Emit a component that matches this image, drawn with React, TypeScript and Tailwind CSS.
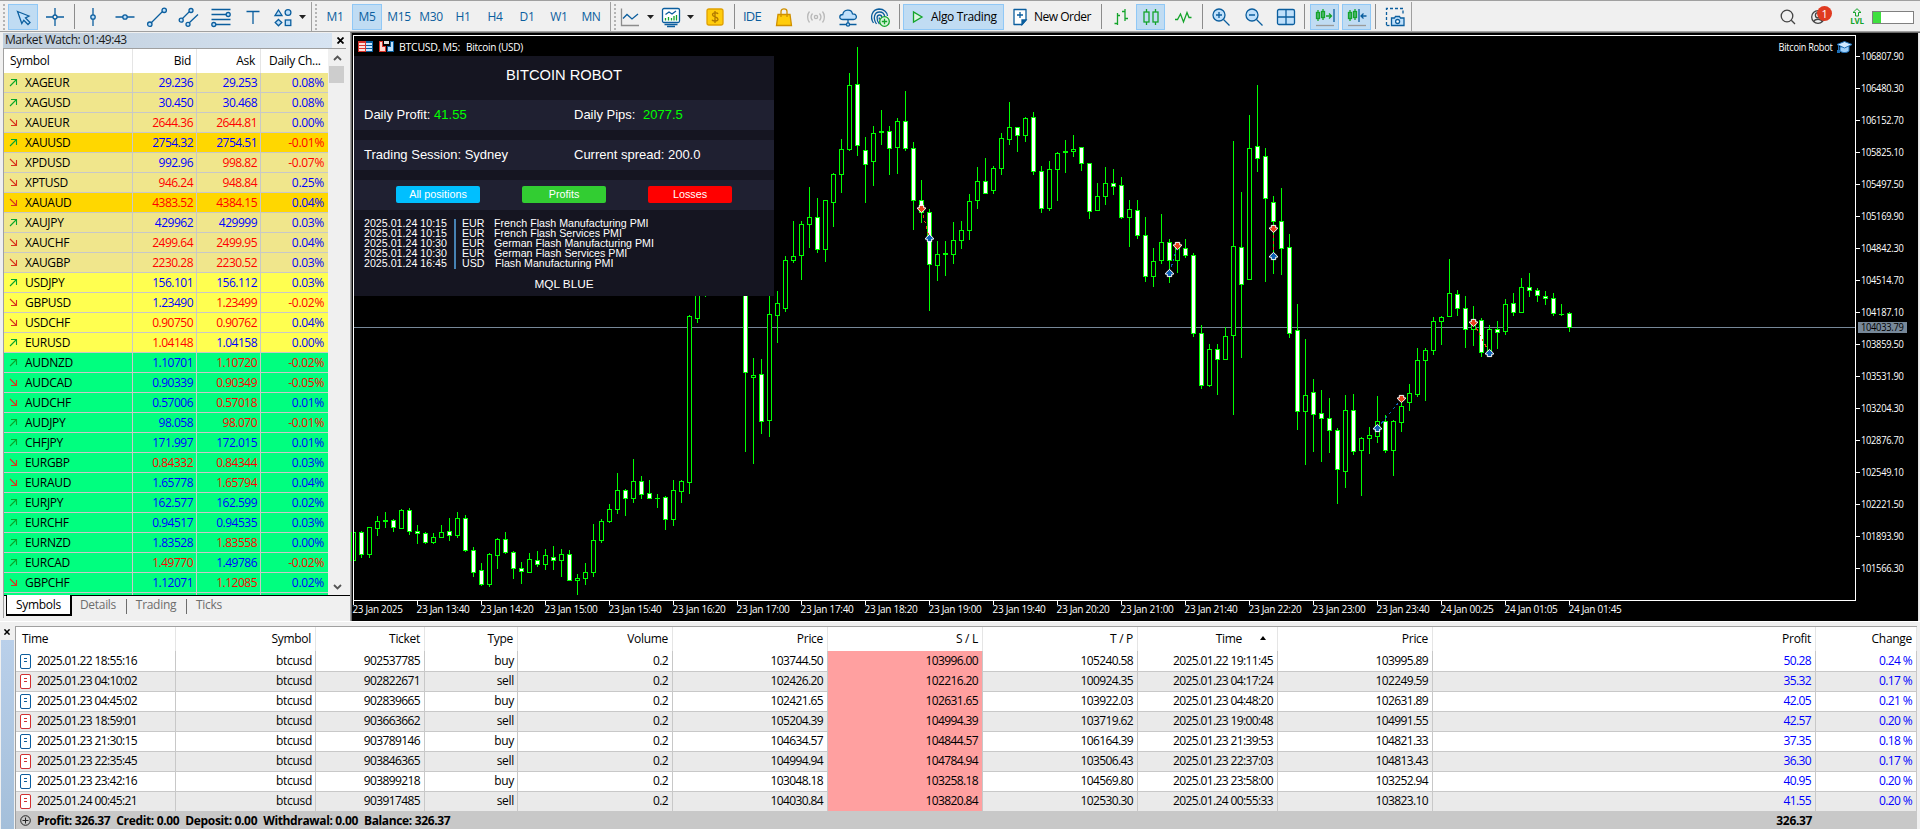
import React from 'react';
import clsx from 'clsx';

type Dir = 'up' | 'down';

interface Quote {
  symbol: string;
  dir: Dir;
  bid: string;
  ask: string;
  change: string;
  // r = red, b = blue for bid and ask
  tone: string;
  group: 'metal' | 'gold' | 'major' | 'cross';
}

const q = (symbol: string, dir: Dir, bid: string, ask: string, change: string, tone: string, group: Quote['group']): Quote => ({
  symbol, dir, bid, ask, change, tone, group,
});

const quotes: Quote[] = [
  q('XAGEUR', 'up', '29.236', '29.253', '0.08%', 'bb', 'metal'),
  q('XAGUSD', 'up', '30.450', '30.468', '0.08%', 'bb', 'metal'),
  q('XAUEUR', 'down', '2644.36', '2644.81', '0.00%', 'rr', 'metal'),
  q('XAUUSD', 'up', '2754.32', '2754.51', '-0.01%', 'bb', 'gold'),
  q('XPDUSD', 'down', '992.96', '998.82', '-0.07%', 'br', 'metal'),
  q('XPTUSD', 'down', '946.24', '948.84', '0.25%', 'rr', 'metal'),
  q('XAUAUD', 'down', '4383.52', '4384.15', '0.04%', 'rr', 'gold'),
  q('XAUJPY', 'up', '429962', '429999', '0.03%', 'bb', 'metal'),
  q('XAUCHF', 'down', '2499.64', '2499.95', '0.04%', 'rr', 'metal'),
  q('XAUGBP', 'down', '2230.28', '2230.52', '0.03%', 'rr', 'metal'),
  q('USDJPY', 'up', '156.101', '156.112', '0.03%', 'bb', 'major'),
  q('GBPUSD', 'down', '1.23490', '1.23499', '-0.02%', 'br', 'major'),
  q('USDCHF', 'down', '0.90750', '0.90762', '0.04%', 'rr', 'major'),
  q('EURUSD', 'up', '1.04148', '1.04158', '0.00%', 'rb', 'major'),
  q('AUDNZD', 'up', '1.10701', '1.10720', '-0.02%', 'br', 'cross'),
  q('AUDCAD', 'down', '0.90339', '0.90349', '-0.05%', 'br', 'cross'),
  q('AUDCHF', 'down', '0.57006', '0.57018', '0.01%', 'br', 'cross'),
  q('AUDJPY', 'up', '98.058', '98.070', '-0.01%', 'br', 'cross'),
  q('CHFJPY', 'up', '171.997', '172.015', '0.01%', 'bb', 'cross'),
  q('EURGBP', 'down', '0.84332', '0.84344', '0.03%', 'rr', 'cross'),
  q('EURAUD', 'down', '1.65778', '1.65794', '0.04%', 'br', 'cross'),
  q('EURJPY', 'up', '162.577', '162.599', '0.02%', 'bb', 'cross'),
  q('EURCHF', 'up', '0.94517', '0.94535', '0.03%', 'bb', 'cross'),
  q('EURNZD', 'up', '1.83528', '1.83558', '0.00%', 'br', 'cross'),
  q('EURCAD', 'up', '1.49770', '1.49786', '-0.02%', 'rb', 'cross'),
  q('GBPCHF', 'down', '1.12071', '1.12085', '0.02%', 'br', 'cross'),
];

const groupBg = {
  metal: 'bg-[#f0e68c]',
  gold: 'bg-[#ffd700]',
  major: 'bg-[#ffff50]',
  cross: 'bg-[#00ff7f]',
};

const deals = [
  ['2025.01.22 18:55:16', 'btcusd', '902537785', 'buy', '0.2', '103744.50', '103996.00', '105240.58', '2025.01.22 19:11:45', '103995.89', '50.28', '0.24 %'],
  ['2025.01.23 04:10:02', 'btcusd', '902822671', 'sell', '0.2', '102426.20', '102216.20', '100924.35', '2025.01.23 04:17:24', '102249.59', '35.32', '0.17 %'],
  ['2025.01.23 04:45:02', 'btcusd', '902839665', 'buy', '0.2', '102421.65', '102631.65', '103922.03', '2025.01.23 04:48:20', '102631.89', '42.05', '0.21 %'],
  ['2025.01.23 18:59:01', 'btcusd', '903663662', 'sell', '0.2', '105204.39', '104994.39', '103719.62', '2025.01.23 19:00:48', '104991.55', '42.57', '0.20 %'],
  ['2025.01.23 21:30:15', 'btcusd', '903789146', 'buy', '0.2', '104634.57', '104844.57', '106164.39', '2025.01.23 21:39:53', '104821.33', '37.35', '0.18 %'],
  ['2025.01.23 22:35:45', 'btcusd', '903846365', 'sell', '0.2', '104994.94', '104784.94', '103506.43', '2025.01.23 22:37:03', '104813.43', '36.30', '0.17 %'],
  ['2025.01.23 23:42:16', 'btcusd', '903899218', 'buy', '0.2', '103048.18', '103258.18', '104569.80', '2025.01.23 23:58:00', '103252.94', '40.95', '0.20 %'],
  ['2025.01.24 00:45:21', 'btcusd', '903917485', 'sell', '0.2', '104030.84', '103820.84', '102530.30', '2025.01.24 00:55:33', '103823.10', '41.55', '0.20 %'],
];

const dealHeads = ['Time', 'Symbol', 'Ticket', 'Type', 'Volume', 'Price', 'S / L', 'T / P', 'Time', 'Price', 'Profit', 'Change'];

const dealCols = 'grid grid-cols-[160px_140px_109px_93px_155px_155px_155px_155px_140px_155px_383px_101px]';

// bar index, high, body top, body bottom, low, 1 = falling (filled)
const candles: number[][] = [
  [0, 532, 532, 561, 561, 0], [1, 531, 532, 555, 558, 1], [2, 527, 527, 555, 558, 0], [3, 516, 521, 529, 536, 0],
  [4, 512, 520, 522, 528, 0], [5, 519, 520, 528, 532, 1], [6, 509, 510, 529, 529, 0], [7, 508, 510, 532, 535, 1],
  [8, 525, 531, 534, 544, 1], [9, 532, 533, 543, 544, 1], [10, 533, 537, 543, 544, 0], [11, 525, 532, 538, 538, 0],
  [12, 518, 531, 536, 541, 1], [13, 512, 518, 536, 538, 0], [14, 515, 518, 551, 552, 1], [15, 547, 550, 573, 577, 1],
  [16, 563, 570, 585, 586, 1], [17, 553, 554, 585, 587, 0], [18, 538, 539, 556, 569, 0], [19, 532, 539, 553, 554, 1],
  [20, 551, 552, 569, 579, 1], [21, 562, 568, 572, 584, 1], [22, 553, 559, 573, 573, 0], [23, 551, 560, 565, 567, 1],
  [24, 549, 555, 565, 570, 0], [25, 546, 557, 561, 570, 1], [26, 549, 554, 561, 577, 0], [27, 550, 554, 581, 581, 1],
  [28, 574, 578, 581, 595, 0], [29, 563, 572, 579, 585, 0], [30, 524, 540, 573, 577, 0], [31, 519, 521, 541, 543, 0],
  [32, 504, 509, 522, 523, 0], [33, 473, 490, 510, 514, 0], [34, 489, 490, 499, 516, 1], [35, 459, 481, 499, 503, 0],
  [36, 476, 481, 495, 499, 1], [37, 480, 493, 499, 499, 1], [38, 494, 498, 499, 508, 0], [39, 496, 497, 520, 530, 1],
  [40, 480, 490, 520, 526, 0], [41, 480, 481, 492, 503, 0], [42, 315, 316, 483, 494, 0], [43, 280, 280, 319, 323, 0],
  [44, 280, 280, 290, 297, 1], [49, 280, 280, 373, 452, 1], [50, 358, 375, 378, 464, 0], [51, 359, 374, 422, 434, 1],
  [52, 280, 314, 421, 437, 0], [53, 291, 303, 316, 343, 0], [54, 256, 260, 309, 312, 0], [55, 221, 256, 261, 263, 0],
  [56, 221, 224, 256, 280, 0], [57, 187, 217, 225, 248, 0], [58, 198, 217, 250, 253, 1], [59, 200, 200, 250, 262, 0],
  [60, 173, 174, 203, 227, 0], [61, 139, 149, 175, 193, 0], [62, 73, 85, 150, 151, 0], [63, 47, 84, 146, 156, 1],
  [64, 137, 150, 165, 203, 1], [65, 126, 133, 162, 186, 0], [66, 110, 131, 133, 145, 0], [67, 126, 131, 149, 175, 1],
  [68, 118, 121, 148, 174, 0], [69, 91, 121, 149, 151, 1], [70, 142, 148, 201, 230, 1], [71, 180, 200, 213, 223, 1],
  [72, 209, 212, 265, 311, 1], [73, 241, 254, 266, 281, 0], [74, 241, 253, 255, 276, 0], [75, 222, 240, 255, 264, 0],
  [76, 221, 230, 241, 249, 0], [77, 194, 201, 231, 240, 0], [78, 167, 181, 201, 209, 0], [79, 158, 181, 194, 194, 1],
  [80, 166, 168, 191, 194, 0], [81, 133, 138, 169, 175, 0], [82, 102, 127, 140, 145, 0], [83, 127, 127, 136, 152, 1],
  [84, 117, 118, 136, 142, 0], [85, 112, 117, 172, 175, 1], [86, 166, 171, 209, 213, 1], [87, 161, 169, 209, 211, 0],
  [88, 152, 153, 170, 201, 0], [89, 140, 151, 153, 173, 0], [90, 135, 149, 152, 157, 0], [91, 147, 147, 164, 171, 1],
  [92, 163, 163, 212, 219, 1], [93, 183, 196, 211, 211, 0], [94, 167, 183, 197, 205, 0], [95, 169, 183, 187, 195, 1],
  [96, 177, 185, 218, 219, 1], [97, 200, 209, 218, 247, 0], [98, 200, 210, 236, 239, 1], [99, 217, 235, 277, 282, 1],
  [100, 248, 261, 277, 287, 0], [101, 214, 242, 261, 264, 0], [102, 239, 242, 261, 283, 1], [103, 243, 246, 261, 273, 0],
  [104, 239, 248, 256, 258, 1], [105, 253, 255, 334, 337, 1], [106, 325, 333, 386, 389, 1], [107, 344, 349, 386, 387, 0],
  [108, 344, 349, 360, 395, 1], [109, 327, 336, 360, 360, 0], [110, 141, 246, 336, 415, 0], [111, 192, 247, 285, 358, 1],
  [112, 115, 148, 280, 280, 0], [113, 85, 146, 159, 172, 1], [114, 148, 156, 199, 282, 1], [115, 196, 202, 222, 274, 1],
  [116, 188, 221, 249, 275, 1], [117, 234, 247, 334, 338, 1], [118, 304, 330, 412, 430, 1], [119, 339, 395, 412, 465, 0],
  [120, 379, 392, 415, 452, 1], [121, 390, 413, 419, 462, 1], [122, 398, 418, 431, 453, 1], [123, 428, 430, 470, 504, 1],
  [124, 395, 410, 472, 488, 0], [125, 394, 410, 452, 455, 1], [126, 437, 438, 451, 496, 0], [127, 427, 435, 439, 454, 0],
  [128, 396, 421, 437, 443, 0], [129, 415, 421, 451, 453, 1], [130, 420, 421, 451, 476, 0], [131, 402, 406, 423, 432, 0],
  [132, 384, 393, 403, 411, 0], [133, 348, 360, 395, 397, 0], [134, 348, 350, 361, 401, 0], [135, 317, 321, 351, 355, 0],
  [136, 316, 317, 322, 345, 0], [137, 259, 293, 317, 317, 0], [138, 290, 294, 309, 316, 1], [139, 296, 308, 330, 348, 1],
  [140, 306, 320, 330, 346, 0], [141, 318, 320, 353, 357, 1], [142, 325, 329, 352, 352, 0], [143, 321, 329, 333, 349, 1],
  [144, 299, 304, 332, 335, 0], [145, 293, 303, 313, 316, 1], [146, 278, 287, 313, 313, 0], [147, 273, 287, 291, 297, 1],
  [148, 288, 290, 296, 302, 1], [149, 291, 296, 299, 305, 1], [150, 293, 298, 314, 316, 1], [151, 304, 314, 315, 316, 0],
  [152, 312, 313, 328, 332, 1],
];

const trades = [
  { from: [921, 209], to: [929, 238], kind: 'sell' },
  { from: [1169, 273], to: [1177, 246], kind: 'buy' },
  { from: [1273, 229], to: [1273, 256], kind: 'sell' },
  { from: [1377, 428], to: [1401, 399], kind: 'buy' },
  { from: [1473, 323], to: [1489, 353], kind: 'sell' },
];

const timeLabels = [
  '23 Jan 2025', '23 Jan 13:40', '23 Jan 14:20', '23 Jan 15:00', '23 Jan 15:40', '23 Jan 16:20', '23 Jan 17:00',
  '23 Jan 17:40', '23 Jan 18:20', '23 Jan 19:00', '23 Jan 19:40', '23 Jan 20:20', '23 Jan 21:00', '23 Jan 21:40',
  '23 Jan 22:20', '23 Jan 23:00', '23 Jan 23:40', '24 Jan 00:25', '24 Jan 01:05', '24 Jan 01:45',
];

const priceLabels = [
  '106807.90', '106480.30', '106152.70', '105825.10', '105497.50', '105169.90', '104842.30', '104514.70', '104187.10',
  '103859.50', '103531.90', '103204.30', '102876.70', '102549.10', '102221.50', '101893.90', '101566.30',
];

const BLUE = '#0b5e9e';
const PALE = '#bfe0fb';
const GREEN = '#14a42b';

/* ---------- toolbar ---------- */

const Glyph: React.FC<{ children: React.ReactNode; color?: string }> = ({ children, color = BLUE }) => (
  <svg className="w-6 h-6 shrink-0" viewBox="0 0 24 24" fill="none" stroke={color} strokeWidth={1.3}>
    {children}
  </svg>
);

const Slot: React.FC<{ w: string; active?: boolean; children?: React.ReactNode }> = ({ w, active, children }) => (
  <div className={clsx('h-[26px] flex items-center justify-center shrink-0', w, active && 'bg-[#c0dcf3] border border-[#90c8f6]')}>
    {children}
  </div>
);

const Sep: React.FC<{ w: string }> = ({ w }) => (
  <div className={clsx('flex justify-center shrink-0', w)}>
    <div className="w-px h-[25px] bg-[#8c8c8c]" />
  </div>
);

const Grip: React.FC<{ w: string; edge?: boolean }> = ({ w, edge }) => (
  <div className={clsx('h-[29px] flex items-center justify-center gap-[3px] shrink-0', w)}>
    {edge && <div className="w-px h-[29px] bg-[#a0a0a0]" />}
    <div className="w-[2px] h-[26px] bg-[repeating-linear-gradient(to_bottom,#b4b4b4_0_2px,transparent_2px_4px)]" />
  </div>
);

const Caret: React.FC<{ w: string }> = ({ w }) => (
  <div className={clsx('flex justify-center shrink-0', w)}>
    <svg className="w-[7px] h-1" viewBox="0 0 7 4"><path d="M0 0H7L3.5 4Z" fill="#222" /></svg>
  </div>
);

const Toolbar: React.FC = () => (
  <div className="h-8 flex items-center border-t border-b border-[#a0a0a0] bg-[#f0f0f0] pt-px shrink-0">
    <Grip w="w-[7px]" />
    <Slot w="w-[30px] mx-px" active>
      <Glyph>
        <path d="M6.5 6.5L18 11L14.5 13L19 17.5L17 19.5L12.8 15.2L10.8 18.5Z" fill={PALE} />
      </Glyph>
    </Slot>
    <Slot w="w-8"><Glyph><path d="M3 12H10M14 12H21M12 3V10M12 14V21" /><circle cx="12" cy="12" r="2" /></Glyph></Slot>
    <Sep w="w-[6px]" />
    <Slot w="w-8"><Glyph><path d="M12 3V10M12 14V21" /><circle cx="12" cy="12" r="2.2" fill={PALE} /></Glyph></Slot>
    <Slot w="w-8"><Glyph><path d="M2.5 12H10M14 12H21.5" /><circle cx="12" cy="12" r="2.2" fill={PALE} /></Glyph></Slot>
    <Slot w="w-8"><Glyph><path d="M6 18L18 6" /><circle cx="4.8" cy="19.2" r="2.2" fill={PALE} /><circle cx="19.2" cy="5.3" r="2.2" fill={PALE} /></Glyph></Slot>
    <Slot w="w-8">
      <Glyph>
        <path d="M5 14L12.5 6.5M12 18L21 9.5" />
        <circle cx="4.2" cy="15.2" r="2" fill={PALE} /><circle cx="14" cy="5.5" r="2" fill={PALE} /><circle cx="11" cy="19.3" r="2" fill={PALE} />
      </Glyph>
    </Slot>
    <Slot w="w-8">
      <Glyph>
        <path d="M2.5 4.5H21.5M2.5 9.5H17M2.5 14.5H21.5M7 19.5H21.5" />
        <circle cx="19.2" cy="9.5" r="2" fill={PALE} /><circle cx="4.8" cy="19.5" r="2" fill={PALE} />
      </Glyph>
    </Slot>
    <Slot w="w-8"><Glyph><path d="M5.5 6.5H18.5M12 6.5V19" /></Glyph></Slot>
    <Slot w="w-7">
      <Glyph>
        <path d="M7.5 5L11 10.5H4Z" fill={PALE} /><circle cx="17" cy="7.5" r="2.9" fill={PALE} />
        <path d="M7.5 14.5L10.8 17.5L7.5 20.8L4.2 17.5Z" fill={PALE} /><rect x="14.3" y="15" width="5.5" height="5.5" fill={PALE} />
      </Glyph>
    </Slot>
    <Caret w="w-[11px]" />
    <Grip w="w-[11px]" edge />
    {['M1', 'M5', 'M15', 'M30', 'H1', 'H4', 'D1', 'W1', 'MN'].map((tf) => (
      <Slot key={tf} w={tf === 'M5' ? 'w-[30px] mx-px' : 'w-8'} active={tf === 'M5'}>
        <span className="text-[12px] tracking-[-0.3px] text-[#0b5e9e]">{tf}</span>
      </Slot>
    ))}
    <Grip w="w-[11px]" edge />
    <Slot w="w-[24px]"><Glyph><path d="M3.5 3.5V20.5H21" stroke="#8c8c8c" /><path d="M5 13.5L9 9.5L14 14L20 9" /></Glyph></Slot>
    <Caret w="w-[16px]" />
    <Slot w="w-[26px]">
      <Glyph>
        <rect x="3.5" y="3.5" width="17" height="14" rx="1.5" fill="#fff" />
        <path d="M5.5 19.5H18.5M8 21.5H16" />
        <path d="M6.5 9.5L10 7L13 9L17 6" /><path d="M6.5 15.5V13M9.5 15.5V12M12.5 15.5V13M15 15.5V11M17.5 15.5V10" stroke={GREEN} />
      </Glyph>
    </Slot>
    <Caret w="w-[12px]" />
    <Slot w="w-[36px] pl-px">
      <Glyph color="#e0a000">
        <rect x="4" y="4" width="16" height="16" rx="2" fill="#ffcc0c" />
        <path d="M15 9C14.5 7.5 9.5 7.5 9.5 9.8C9.5 12 15 11.8 15 14.2C15 16.5 9.5 16.5 9 14.8M12 6V18" stroke="#b07800" />
      </Glyph>
    </Slot>
    <Sep w="w-[4px]" />
    <Slot w="w-8"><span className="text-[13px] tracking-[-0.7px] text-[#0b5e9e]">IDE</span></Slot>
    <Slot w="w-8">
      <Glyph color="#d09000">
        <path d="M6 9.5H18L19.5 20.5H4.5Z" fill="#ffcc0c" /><path d="M9 12V6.5C9 3 15 3 15 6.5V12" />
      </Glyph>
    </Slot>
    <Slot w="w-8">
      <Glyph color="#b8b8b8">
        <circle cx="12" cy="12" r="1.6" /><path d="M8.5 8.5C6.8 10.5 6.8 13.5 8.5 15.5M15.5 8.5C17.2 10.5 17.2 13.5 15.5 15.5M5.5 6.5C3 9.5 3 14.5 5.5 17.5M18.5 6.5C21 9.5 21 14.5 18.5 17.5" />
      </Glyph>
    </Slot>
    <Slot w="w-8">
      <Glyph>
        <path d="M7 14.5C2.5 14.5 3 9.5 6.8 9.5C7.5 4 15.5 3.5 16.5 8.8C21.5 8.8 21.5 14.5 17.5 14.5Z" fill={PALE} />
        <path d="M12 14.5V18M3.5 19.5H10M14 19.5H20.5" /><circle cx="12" cy="19.5" r="1.6" fill={PALE} />
      </Glyph>
    </Slot>
    <Slot w="w-8">
      <Glyph>
        <path d="M5.5 18C1.5 12 4 4.5 11 4C16 4 19.5 7.5 19.5 11M8.5 19C4.5 13 6.5 7 11.5 7C14.5 7 16.5 9 16.8 12M11.5 19C7.5 14 9 10 11.5 10C13 10 13.8 11 13.8 12.5M11.3 12.5V14.5" />
        <circle cx="16.5" cy="16.5" r="4.8" stroke={GREEN} fill="#d8f5dc" /><path d="M16.5 13.8V19.2M13.8 16.5H19.2" stroke={GREEN} />
      </Glyph>
    </Slot>
    <Sep w="w-[7px]" />
    <div className="w-[101px] h-[26px] flex items-center border border-[#90c8f6] bg-[#c0dcf3] shrink-0 pl-px">
      <Glyph color={GREEN}><path d="M8.5 7V17L17 12Z" fill="#dcf5e0" /></Glyph>
      <span className="text-[12px] tracking-[-0.35px] ml-[2px] whitespace-nowrap">Algo Trading</span>
    </div>
    <div className="w-[95px] h-[26px] flex items-center shrink-0 pl-[4px]">
      <Glyph>
        <path d="M6 4.5H18V15L14 19.5H6Z" fill="#fff" strokeLinejoin="round" /><path d="M18 15H14V19.5Z" fill={BLUE} /><path d="M12 7V13M9 10H15" />
      </Glyph>
      <span className="text-[12px] tracking-[-0.5px] ml-[2px] whitespace-nowrap">New Order</span>
    </div>
    <Sep w="w-[4px]" />
    <Slot w="w-[33px] pl-[2px]"><Glyph color={GREEN}><path d="M8.5 8V20M5.5 18.5H8.5M8.5 10.5H11M16 4V16M13 6.5H16M16 13.5H19" /></Glyph></Slot>
    <Slot w="w-[29px]" active><Glyph color={GREEN}><path d="M7.5 4V7M7.5 17V20M16.5 4V7M16.5 17V20" /><rect x="5" y="7" width="5" height="10" /><rect x="14" y="7" width="5" height="10" /></Glyph></Slot>
    <Slot w="w-[36px]"><Glyph color={GREEN}><path d="M4 14.5H6.5L9.5 9L12.5 17L16 7.5L18 12.5H20.5" /></Glyph></Slot>
    <Sep w="w-[3px]" />
    <Slot w="w-[34px]"><Glyph><circle cx="10" cy="10" r="6" fill={PALE} /><path d="M14.5 14.5L20.5 20.5M10 7V13M7 10H13" /></Glyph></Slot>
    <Slot w="w-8"><Glyph><circle cx="10" cy="10" r="6" fill={PALE} /><path d="M14.5 14.5L20.5 20.5M7 10H13" /></Glyph></Slot>
    <Slot w="w-8"><Glyph><rect x="3.5" y="4.5" width="17" height="15" rx="1.5" fill={PALE} /><path d="M12 4.5V19.5M3.5 12H20.5" /></Glyph></Slot>
    <Sep w="w-[5px]" />
    <Slot w="w-[29px] ml-[3px]" active>
      <Glyph color={GREEN}>
        <path d="M5 5V16M10 4V15" /><rect x="3.5" y="7.5" width="3" height="6" /><rect x="8.5" y="6.5" width="3" height="6" /><path d="M13 11H18M16 8.5L18.5 11L16 13.5" />
        <path d="M21 4V17" stroke={BLUE} /><path d="M3 20.5H21" stroke="#9a9a9a" />
      </Glyph>
    </Slot>
    <Slot w="w-[29px] ml-[3px]" active>
      <Glyph color={GREEN}>
        <path d="M5 5V16M10 4V15" /><rect x="3.5" y="7.5" width="3" height="6" /><rect x="8.5" y="6.5" width="3" height="6" />
        <path d="M14 4V17M21.5 11H16.5M18.5 8.5L16 11L18.5 13.5" stroke={BLUE} /><path d="M3 20.5H21" stroke="#9a9a9a" />
      </Glyph>
    </Slot>
    <Sep w="w-[8px]" />
    <Slot w="w-[32px]">
      <Glyph>
        <path d="M3.5 20V3.5H20V9" strokeDasharray="3 2" /><path d="M3.5 20.5H7" strokeDasharray="3 2" />
        <path d="M8.5 13H11.5L12.5 11.5H16.5L17.5 13H21V20.5H8.5Z" fill={PALE} /><circle cx="14.6" cy="16.5" r="2" fill="#fff" />
      </Glyph>
    </Slot>
    <div className="w-px h-[29px] bg-[#a0a0a0] shrink-0" />
    <div className="flex-1" />
    <Slot w="w-[28px]"><Glyph color="#444"><circle cx="11" cy="11" r="5.8" /><path d="M15.3 15.3L19 19" /></Glyph></Slot>
    <div className="relative w-[39px] flex pl-[4px]">
      <Glyph color="#444"><circle cx="12" cy="12" r="6.3" /><circle cx="12" cy="10.3" r="2.6" /><path d="M7.8 16.5C9 13.5 15 13.5 16.2 16.5" /></Glyph>
      <span className="absolute left-[15px] top-px w-[15px] h-[15px] rounded-full bg-[#e03a20] text-white text-[11px] leading-[15px] text-center">1</span>
    </div>
    <div className="w-[32px] flex flex-col items-center">
      <svg className="w-[10px] h-[9px]" viewBox="0 0 10 9" fill="none" stroke={GREEN}><path d="M5 .7L9 4.5H6.5V8H3.5V4.5H1Z" /></svg>
      <span className="text-[8px] leading-[8px] font-bold text-[#14a42b]">LVL</span>
    </div>
    <div className="w-[42px] h-[13px] border border-[#808080] bg-white ml-[-1px] mr-[6px] mt-px">
      <div className="w-[8px] h-full bg-[#3fe03f]" />
    </div>
  </div>
);

/* ---------- market watch ---------- */

const Trend: React.FC<{ dir: Dir }> = ({ dir }) => (
  <svg className="w-[9px] h-[9px]" viewBox="0 0 9 9" fill="none" stroke={dir === 'up' ? '#0aa52a' : '#d8341c'} strokeWidth={1.1}>
    {dir === 'up' ? <path d="M1 8L7.5 1.5M2 1.5H7.5V7" /> : <path d="M1 1L7.5 7.5M2 7.5H7.5V2" />}
  </svg>
);

const quoteCols = 'grid grid-cols-[129px_64px_64px_67px]';

const MarketWatch: React.FC = () => (
  <div className="w-[350px] shrink-0 flex flex-col pl-[3px] pt-px">
    <div className="flex h-[15px] shrink-0">
      <div className="w-[329px] bg-linear-to-r from-[#bfcddb] to-[#d7e4f2] pl-[2px] leading-[13px] text-[12px] tracking-[-0.45px] text-[#1a1a1a]">
        Market Watch: 01:49:43
      </div>
      <svg className="w-[7px] h-[7px] ml-[5px] mt-[4px]" viewBox="0 0 7 7" stroke="#000" strokeWidth={1.8}><path d="M.5 .5L6.5 6.5M6.5 .5L.5 6.5" /></svg>
    </div>
    <div className="w-[343px] h-[547px] flex border-t border-l border-[#a0a0a0] shrink-0">
      <div className="w-[324px] overflow-hidden bg-white">
        <div className={clsx(quoteCols, 'h-[24px] leading-[24px]')}>
          <div className="pl-[6px] border-r border-[#e5e5e5]">Symbol</div>
          <div className="pr-[5px] border-r border-[#e5e5e5] text-right">Bid</div>
          <div className="pr-[5px] border-r border-[#e5e5e5] text-right">Ask</div>
          <div className="pl-[8px] whitespace-nowrap">Daily Ch...</div>
        </div>
        {quotes.map((row) => (
          <div key={row.symbol} className={clsx(quoteCols, 'h-5 leading-[19px] text-right border-b border-[#c8c8c8] tracking-[-0.5px]', groupBg[row.group])}>
            <div className="flex items-center gap-[7px] pl-[5px] border-r border-[#c8c8c8] tracking-[-0.3px]"><Trend dir={row.dir} />{row.symbol}</div>
            <div className={clsx('pr-[3px] border-r border-[#c8c8c8]', row.tone[0] === 'r' ? 'text-[#ff0000]' : 'text-[#0000ff]')}>{row.bid}</div>
            <div className={clsx('pr-[3px] border-r border-[#c8c8c8]', row.tone[1] === 'r' ? 'text-[#ff0000]' : 'text-[#0000ff]')}>{row.ask}</div>
            <div className={clsx('pr-[4px] tracking-[-0.3px]', row.change[0] === '-' ? 'text-[#ff0000]' : 'text-[#0000ff]')}>{row.change}</div>
          </div>
        ))}
        <div className={clsx(quoteCols, 'h-[3px] bg-[#00ff7f]')}>
          <div className="border-r border-[#c8c8c8]" /><div className="border-r border-[#c8c8c8]" /><div className="border-r border-[#c8c8c8]" />
        </div>
      </div>
      <div className="flex-1 flex flex-col items-center bg-[#f0f0f0] pt-[6px]">
        <svg className="w-[9px] h-[6px]" viewBox="0 0 9 6" fill="none" stroke="#555" strokeWidth={1.8}><path d="M1 5L4.5 1.5L8 5" /></svg>
        <div className="w-[15px] h-[17px] mt-[5px] mr-[2px] bg-[#cdcdcd]" />
        <div className="flex-1" />
        <svg className="w-[9px] h-[6px] mb-[5px]" viewBox="0 0 9 6" fill="none" stroke="#555" strokeWidth={1.8}><path d="M1 1L4.5 4.5L8 1" /></svg>
      </div>
    </div>
    <div className="h-[23px] flex items-start border-l border-[#a0a0a0] text-[#6d6d6d] leading-[18px]">
      <div className="flex w-full border-t border-black">
        <div className="w-[66px] h-[21px] -mt-px ml-[2px] bg-white border-l border-r-2 border-b-2 border-black text-black text-center leading-[19px]">Symbols</div>
        <div className="w-[52px] text-center">Details</div>
        <div className="w-px h-[15px] mt-[3px] ml-[2px] bg-[#6d6d6d]" />
        <div className="w-[58px] text-center">Trading</div>
        <div className="w-px h-[15px] mt-[3px] ml-px bg-[#6d6d6d]" />
        <div className="w-[44px] text-center">Ticks</div>
      </div>
    </div>
  </div>
);

/* ---------- chart ---------- */

const Arrow: React.FC<{ x: number; y: number; up: boolean }> = ({ x, y, up }) => (
  <path
    transform={`translate(${x + 0.5} ${y}) scale(1 ${up ? 1 : -1})`}
    d="M0 -3.6L4 .2V1.2H2.2V3.6H-2.2V1.2H-4V.2Z"
    fill={up ? '#0f5fb4' : '#e8401c'}
    stroke="#fff"
    strokeWidth={1}
  />
);

const PriceChart: React.FC = () => (
  <svg className="block w-[1568px] h-[588px]" viewBox="351 33 1568 588" shapeRendering="crispEdges">
    <rect x="351" y="33" width="1567" height="588" fill="#000" />
    <path d="M351.5 33V621" stroke="#696969" />
    <path d="M1918.5 33V621" stroke="#e3e3e3" />
    <path d="M354 327.5H1855" stroke="#778899" />
    {candles.map(([i, hi, top, bottom, lo, filled]) => {
      const x = 353 + i * 8;
      const h = bottom - top;
      return (
        <g key={i}>
          <rect x={x} y={hi} width="1" height={lo - hi} fill="#00ff00" />
          <rect x={x - 2} y={top} width="5" height={h} fill="#00ff00" />
          {h > 2 && <rect x={x - 1} y={top + 1} width="3" height={h - 2} fill={filled ? '#fff' : '#000'} />}
        </g>
      );
    })}
    {trades.map(({ from, to, kind }) => (
      <path
        key={from[0]}
        d={`M${from[0] + 0.5} ${from[1]}L${to[0] + 0.5} ${to[1]}`}
        stroke={kind === 'buy' ? '#0f5fb4' : '#e8401c'}
        strokeDasharray="3 3"
      />
    ))}
    <g shapeRendering="auto">
      {trades.map(({ from, to, kind }) => (
        <React.Fragment key={from[0]}>
          <Arrow x={from[0]} y={from[1]} up={kind === 'buy'} />
          <Arrow x={to[0]} y={to[1]} up={kind === 'sell'} />
        </React.Fragment>
      ))}
    </g>
    <rect x="352" y="36" width="1" height="584" fill="#000" />
    <path d="M353.5 604V35.5H1855.5V600.5H353" fill="none" stroke="#fff" />
    <g fill="#fff" fontSize="10">
      {priceLabels.map((p, i) => (
        <g key={p}>
          <rect x="1856" y={56 + i * 32} width="4" height="1" />
          <text x="1861" y={60 + i * 32} textLength="42.5" lengthAdjust="spacingAndGlyphs">{p}</text>
        </g>
      ))}
      {timeLabels.map((t, i) => (
        <g key={t}>
          <rect x={353 + i * 64} y="601" width="1" height="4" />
          <text x={352.5 + i * 64} y="613" textLength={i ? 53 : 50} lengthAdjust="spacingAndGlyphs">{t}</text>
        </g>
      ))}
    </g>
    <rect x="1858" y="322" width="49" height="11" fill="#778899" />
    <text x="1861" y="331" fontSize="10" textLength="42.5" lengthAdjust="spacingAndGlyphs" fill="#000">104033.79</text>

    <g>
      <rect x="358" y="41" width="15" height="11" fill="#fff" />
      <rect x="358" y="41" width="8" height="11" fill="#d8342c" /><rect x="366" y="41" width="7" height="11" fill="#0b5e9e" />
      <path d="M359 43.5H365M359 46.5H365M359 49.5H365" stroke="#ffe0dc" strokeWidth="2" />
      <path d="M366 43.5H372M366 46.5H372M366 49.5H372" stroke="#c8e6ff" strokeWidth="2" />
      <path d="M379.5 41.5H382.5V46.5H385.5V51.5H379.5Z" fill="#ffd8d0" stroke="#d8342c" />
      <path d="M393.5 41.5H390.5V46.5H387.5V51.5H393.5Z" fill="#bfe0fb" stroke="#0b5e9e" />
      <rect x="384" y="41" width="5" height="3" fill="#ddd" />
    </g>
    <text x="399" y="50.5" fontSize="10.5" textLength="61" lengthAdjust="spacingAndGlyphs" fill="#fff">BTCUSD, M5:</text>
    <text x="466" y="50.5" fontSize="10.5" textLength="57" lengthAdjust="spacingAndGlyphs" fill="#fff">Bitcoin (USD)</text>
    <text x="1778.5" y="50.5" fontSize="10.5" textLength="54" lengthAdjust="spacingAndGlyphs" fill="#fff">Bitcoin Robot</text>
    <g shapeRendering="auto">
      <path d="M1840 47V51C1842 53 1847 53 1849 51V46Z" fill="#9fd0fa" stroke="#1c6fb8" />
      <path d="M1837 44.5L1844.5 41.5L1852 44.5L1844.5 48Z" fill="#cfe8ff" stroke="#1c6fb8" />
      <path d="M1838.5 45V50" stroke="#1c6fb8" /><rect x="1837" y="50" width="3" height="3" fill="#1c6fb8" />
    </g>
  </svg>
);

const news = [
  ['2025.01.24 10:15', 'EUR', 'French Flash Manufacturing PMI'],
  ['2025.01.24 10:15', 'EUR', 'French Flash Services PMI'],
  ['2025.01.24 10:30', 'EUR', 'German Flash Manufacturing PMI'],
  ['2025.01.24 10:30', 'EUR', 'German Flash Services PMI'],
  ['2025.01.24 16:45', 'USD', 'Flash Manufacturing PMI'],
];

const RobotPanel: React.FC = () => (
  <div className="absolute left-[3px] top-[23px] w-[420px] h-[240px] bg-[#151521] text-white font-['Liberation_Sans',Arial,sans-serif] tracking-normal">
    <div className="h-[44px] pt-[9px] text-center text-[14.7px] leading-5">BITCOIN ROBOT</div>
    <div className="h-[30px] grid grid-cols-[210px_1fr] bg-[#1f2031] pl-[10px] text-[13px] leading-[29px]">
      <div>Daily Profit: <span className="text-[#00ff00]">41.55</span></div>
      <div>Daily Pips: <span className="text-[#00ff00] ml-1">2077.5</span></div>
    </div>
    <div className="h-[30px] mt-[10px] grid grid-cols-[210px_1fr] bg-[#1f2031] pl-[10px] text-[13px] leading-[29px]">
      <div>Trading Session: Sydney</div>
      <div>Current spread: 200.0</div>
    </div>
    <div className="h-[30px] mt-[10px] flex gap-[42px] bg-[#1f2031] pl-[42px] pt-[6px] text-[10.8px] leading-[17px] text-center">
      <button className="w-[84px] h-[17px] rounded-[2px] bg-[#00bfff]">All positions</button>
      <button className="w-[84px] h-[17px] rounded-[2px] bg-[#32cd32]">Profits</button>
      <button className="w-[84px] h-[17px] rounded-[2px] bg-[#ff0000]">Losses</button>
    </div>
    <div className="mt-[8px] pl-[10px] text-[10.67px] leading-[10px]">
      {news.map(([time, cur, title]) => (
        <div key={title} className="h-[10px] flex whitespace-nowrap">
          <span className="w-[90px]">{time}</span>
          <span className="w-[2px] h-[10px] mt-px mr-[6px] bg-[#4682b4]" />
          <span className={cur === 'USD' ? 'w-[33px]' : 'w-[32px]'}>{cur}</span>
          <span>{title}</span>
        </div>
      ))}
    </div>
    <div className="mt-[8px] text-center text-[11.8px] leading-[16px]">MQL BLUE</div>
  </div>
);

/* ---------- history ---------- */

const DealIcon: React.FC<{ buy: boolean }> = ({ buy }) => (
  <svg className="w-[11px] h-[15px] shrink-0" viewBox="0 0 11 15" fill="#fff" stroke={buy ? '#0b5e9e' : '#d03030'}>
    <rect x=".5" y=".5" width="10" height="14" rx="1.5" />
    <path d="M4 4.5H7M4 7.5H7" />
  </svg>
);

const History: React.FC = () => (
  <div className="h-[208px] flex border-t border-[#fff] pt-[4px] shrink-0">
    <div className="w-[15px] shrink-0 pl-px flex flex-col">
      <svg className="w-[6px] h-[6px] ml-[3px] mt-[3px] mb-[5px] shrink-0" viewBox="0 0 7 7" stroke="#000" strokeWidth={1.8}><path d="M.5 .5L6.5 6.5M6.5 .5L.5 6.5" /></svg>
      <div className="w-[13px] flex-1 bg-linear-to-b from-[#bad0ea] to-[#a4bfda]" />
    </div>
    <div className="w-[1902px] border-t border-l border-[#a0a0a0] bg-white">
      <div className={clsx(dealCols, 'h-[24px] leading-[24px] text-right')}>
        {dealHeads.map((h, i) => (
          <div key={i} className={clsx('border-r border-[#e5e5e5] pr-[4px]', i === 0 && 'text-left pl-[6px]')}>
            {h}
            {i === 8 && <svg className="inline w-[6px] h-[4px] ml-[18px] mr-[7px] mb-[3px]" viewBox="0 0 6 4"><path d="M3 0L6 4H0Z" /></svg>}
          </div>
        ))}
      </div>
      {deals.map((deal, r) => (
        <div key={deal[2]} className={clsx(dealCols, 'h-5 leading-[20px] text-right', r % 2 ? 'bg-[#eaeaea]' : 'bg-white')}>
          {deal.map((value, i) => (
            <div
              key={i}
              className={clsx(
                'border-r border-[#c8c8c8]',
                i === 1 || i === 3 ? 'pr-[3px]' : 'pr-[4px] tracking-[-0.62px]',
                r < 7 && 'border-b',
                i === 0 && 'flex items-center gap-[6px] pl-[4px]',
                i === 6 && 'bg-[#ffa0a0]',
                i > 9 && 'text-[#0000ff]',
              )}
            >
              {i === 0 && <DealIcon buy={deal[3] === 'buy'} />}
              {value}
            </div>
          ))}
        </div>
      ))}
      <div className="h-[19px] flex items-center bg-[#c8c8c8] font-bold leading-[19px] tracking-[-0.35px]">
        <svg className="w-[11px] h-[11px] ml-[4px] mr-[6px]" viewBox="0 0 11 11" fill="none" stroke="#222"><circle cx="5.5" cy="5.5" r="4.8" /><path d="M5.5 2.5V8.5M2.5 5.5H8.5" /></svg>
        <div className="w-[1775px] flex gap-[6px]">
          <span>Profit: 326.37</span>
          <span>Credit: 0.00</span>
          <span>Deposit: 0.00</span>
          <span>Withdrawal: 0.00</span>
          <span>Balance: 326.37</span>
          <span className="ml-auto">326.37</span>
        </div>
      </div>
    </div>
  </div>
);

export default function App() {
  return (
    <div className="w-[1920px] h-[829px] overflow-hidden flex flex-col bg-[#f0f0f0] text-black text-[12px] font-stretch-90% tracking-[-0.3px] font-['Open_Sans','Noto_Sans',sans-serif]">
      <Toolbar />
      <div className="h-[589px] flex shrink-0">
        <MarketWatch />
        <div className="relative w-[1570px] border-t border-l border-t-[#696969] border-l-[#a0a0a0]">
          <PriceChart />
          <RobotPanel />
        </div>
      </div>
      <History />
    </div>
  );
}
